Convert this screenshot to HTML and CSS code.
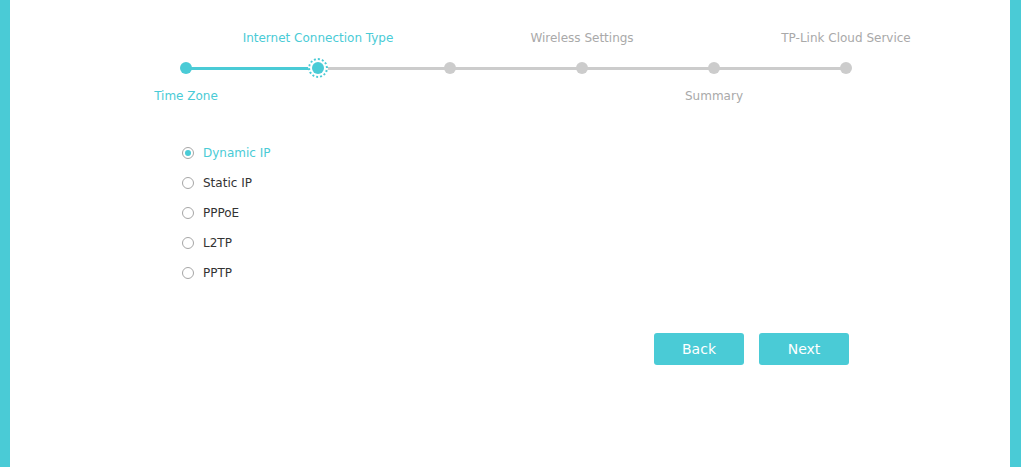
FILE: index.html
```html
<!DOCTYPE html>
<html>
<head>
	<meta charset="utf-8">
	<title>Quick Setup</title>
	<link rel="stylesheet" href="styles.css">
</head>
<body>
	<div class="side-bar"></div>

	<div class="main">
		<div class="stepper">
			<div class="step done first">
				<div class="step-top"></div>
				<div class="step-track"><span class="dot"></span></div>
				<div class="step-bottom">Time Zone</div>
			</div>
			<div class="step current">
				<div class="step-top">Internet Connection Type</div>
				<div class="step-track"><span class="ring"><span class="dot"></span></span></div>
				<div class="step-bottom"></div>
			</div>
			<div class="step">
				<div class="step-top"></div>
				<div class="step-track"><span class="dot"></span></div>
				<div class="step-bottom"></div>
			</div>
			<div class="step">
				<div class="step-top">Wireless Settings</div>
				<div class="step-track"><span class="dot"></span></div>
				<div class="step-bottom"></div>
			</div>
			<div class="step">
				<div class="step-top"></div>
				<div class="step-track"><span class="dot"></span></div>
				<div class="step-bottom">Summary</div>
			</div>
			<div class="step last">
				<div class="step-top">TP-Link Cloud Service</div>
				<div class="step-track"><span class="dot"></span></div>
				<div class="step-bottom"></div>
			</div>
		</div>

		<ul class="conn-list">
			<li class="selected"><span class="radio"></span>Dynamic IP</li>
			<li><span class="radio"></span>Static IP</li>
			<li><span class="radio"></span>PPPoE</li>
			<li><span class="radio"></span>L2TP</li>
			<li><span class="radio"></span>PPTP</li>
		</ul>

		<div class="actions">
			<button class="btn">Back</button>
			<button class="btn">Next</button>
		</div>
	</div>

	<div class="side-bar right"></div>
</body>
</html>
```

FILE: styles.css
```css
*{
    margin:0;
    padding:0;
    box-sizing: border-box;
}
body{
    display: flex;
    min-height: 100vh;
    font-family: "DejaVu Sans", Verdana, sans-serif;
    font-size: 12px;
    background: #fff;
}
.side-bar{
    width: 10px;
    background: #4acbd6;
}
.side-bar.right{
    width: 11px;
}
.main{
    flex: 1;
}

/* steps */
.stepper{
    display: flex;
    width: 792px;
    margin-left: 110px;
}
.step{
    width: 132px;
    display: flex;
    flex-direction: column;
    align-items: center;
    color: #a9a9a9;
}
.step-top,.step-bottom{
    height: 20px;
    line-height: 20px;
    white-space: nowrap;
}
.step-top{
    margin-top: 28px;
}
.step-bottom{
    margin-top: 8px;
}
.step.done,.step.current{
    color: #4acbd6;
}
.step-track{
    position: relative;
    width: 100%;
    height: 20px;
    margin-top: 10px;
    display: flex;
    justify-content: center;
    align-items: center;
}
.step-track::before,.step-track::after{
    content: "";
    position: absolute;
    top: 9px;
    height: 3px;
    width: 50%;
    background: #cccccc;
}
.step-track::before{
    left: 0;
}
.step-track::after{
    right: 0;
}
.step.first .step-track::before,
.step.last .step-track::after{
    display: none;
}
.step.done .step-track::after,
.step.current .step-track::before{
    background: #4acbd6;
}
.dot{
    position: relative;
    z-index: 1;
    width: 12px;
    height: 12px;
    border-radius: 50%;
    background: #cccccc;
}
.step.done .dot,.step.current .dot{
    background: #4acbd6;
}
.ring{
    position: relative;
    z-index: 1;
    display: flex;
    width: 20px;
    height: 20px;
    padding: 2px;
    border: 2px dotted #4acbd6;
    border-radius: 50%;
    background: #fff;
}
.ring .dot{
    flex: none;
}

/* connection types */
.conn-list{
    list-style: none;
    margin-top: 32px;
    padding-left: 172px;
}
.conn-list li{
    height: 30px;
    display: flex;
    align-items: center;
    color: #333;
    font-size: 12px;
}
.conn-list li.selected{
    color: #4acbd6;
}
.radio{
    width: 12px;
    height: 12px;
    border: 1px solid #a6a6a6;
    border-radius: 50%;
    margin-right: 9px;
    display: flex;
    justify-content: center;
    align-items: center;
}
.selected .radio::after{
    content: "";
    width: 6px;
    height: 6px;
    border-radius: 50%;
    background: #4acbd6;
}

/* buttons */
.actions{
    display: flex;
    gap: 15px;
    margin-top: 45px;
    padding-left: 644px;
}
.btn{
    width: 90px;
    height: 32px;
    border: none;
    border-radius: 3px;
    background: #4acbd6;
    color: #fff;
    font-family: "DejaVu Sans", Verdana, sans-serif;
    font-size: 14px;
    cursor: pointer;
}
```
